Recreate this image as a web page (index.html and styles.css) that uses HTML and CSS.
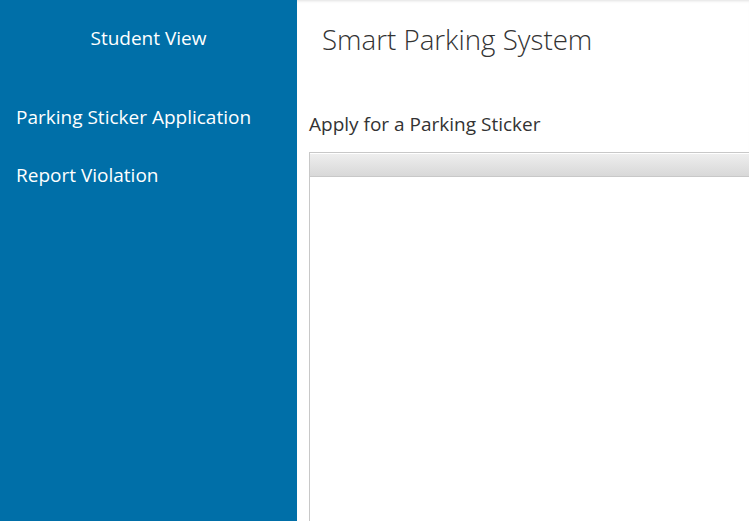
FILE: index.html
```html
<!DOCTYPE html>
<html>
<head>
<meta charset="utf-8">
<link rel="stylesheet" href="styles.css">
</head>
<body>
<div class="app">
  <aside class="sidebar">
    <div class="brand">Student View</div>
    <nav class="nav">
      <a class="nav-item">Parking Sticker Application</a>
      <a class="nav-item">Report Violation</a>
    </nav>
  </aside>
  <main class="main">
    <h1 class="title">Smart Parking System</h1>
    <h2 class="subtitle">Apply for a Parking Sticker</h2>
    <div class="panel">
      <div class="panel-head"></div>
      <div class="panel-body"></div>
    </div>
  </main>
</div>
</body>
</html>
```
FILE: styles.css
```css
html, body {
  margin: 0;
  padding: 0;
  height: 100%;
  overflow: hidden;
}
body {
  font-family: "Open Sans", "Noto Sans", sans-serif;
  background: #fff;
}
.app {
  display: flex;
  height: 521px;
}
.sidebar {
  width: 297px;
  flex: none;
  background: #006fa8;
  color: #fff;
}
.brand {
  text-align: center;
  font-size: 19px;
  padding-top: 25px;
  line-height: 26px;
}
.nav {
  display: flex;
  flex-direction: column;
  gap: 30px;
  padding: 52px 0 0 16px;
}
.nav-item {
  font-size: 19px;
  line-height: 28px;
  color: #fff;
}
.main {
  flex: 1;
  min-width: 0;
  display: flex;
  flex-direction: column;
  box-shadow: inset 0 3px 3px -2px rgba(0,0,0,0.12);
}
.title {
  margin: 0;
  padding: 19px 0 0 25px;
  font-weight: 300;
  font-size: 27.7px;
  line-height: 40px;
  color: #333;
}
.subtitle {
  margin: 0;
  padding: 52px 0 0 12px;
  font-weight: 400;
  font-size: 19px;
  line-height: 26px;
  color: #333;
}
.panel {
  margin: 15px 0 0 12px;
  flex: 1;
  border: 1px solid #c8c8c8;
  border-right: none;
  border-bottom: none;
  display: flex;
  flex-direction: column;
}
.panel-head {
  height: 22px;
  border-top: 1px solid #fff;
  border-bottom: 1px solid #c8c8c8;
  background: linear-gradient(#eeeeee, #d8d8d8);
}
.panel-body {
  flex: 1;
  background: #fff;
}
```
